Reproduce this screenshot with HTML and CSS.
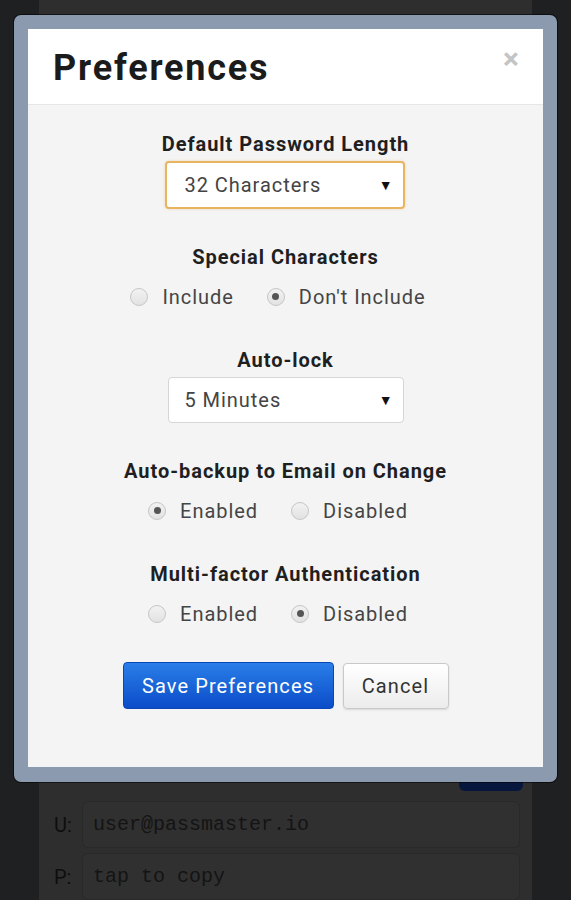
FILE: index.html
```html
<!DOCTYPE html>
<html lang="en">
<head>
<meta charset="utf-8">
<title>Preferences</title>
<link rel="stylesheet" href="styles.css">
</head>
<body>
<div class="page">
  <div class="panel">
    <div class="toolbar"><div class="dark-btn"></div></div>
    <div class="row"><span class="row-label">U:</span><div class="field">user@passmaster.io</div></div>
    <div class="row"><span class="row-label">P:</span><div class="field">tap to copy</div></div>
  </div>
</div>

<div class="modal">
  <div class="modal-inner">
    <div class="modal-header">
      <h1 class="modal-title">Preferences</h1>
      <span class="close">&times;</span>
    </div>
    <div class="modal-body">
      <div class="group">
        <div class="group-title">Default Password Length</div>
        <div class="select select-focus select-wide"><span>32 Characters</span><span class="arrow">&#9660;</span></div>
      </div>
      <div class="group">
        <div class="group-title">Special Characters</div>
        <div class="radios">
          <label class="opt"><span class="radio"></span>Include</label>
          <label class="opt"><span class="radio checked"></span>Don't Include</label>
        </div>
      </div>
      <div class="group">
        <div class="group-title">Auto-lock</div>
        <div class="select"><span>5 Minutes</span><span class="arrow">&#9660;</span></div>
      </div>
      <div class="group">
        <div class="group-title">Auto-backup to Email on Change</div>
        <div class="radios">
          <label class="opt"><span class="radio checked"></span>Enabled</label>
          <label class="opt"><span class="radio"></span>Disabled</label>
        </div>
      </div>
      <div class="group">
        <div class="group-title">Multi-factor Authentication</div>
        <div class="radios">
          <label class="opt"><span class="radio"></span>Enabled</label>
          <label class="opt"><span class="radio checked"></span>Disabled</label>
        </div>
      </div>
      <div class="actions">
        <button class="btn btn-primary">Save Preferences</button>
        <button class="btn btn-default">Cancel</button>
      </div>
    </div>
  </div>
</div>
</body>
</html>
```

FILE: styles.css
```css
* { box-sizing: border-box; }
html, body { margin: 0; padding: 0; }
body {
  background: #1f2022;
  font-family: Roboto, "Liberation Sans", sans-serif;
  letter-spacing: 0.06em;
  width: 571px;
  height: 900px;
  overflow: hidden;
  position: relative;
}
.page {
  padding: 0 39px;
}
.panel {
  background: #2e2e2e;
  height: 900px;
  padding: 0 9px 0 15px;
}
.toolbar {
  display: flex;
  justify-content: flex-end;
  padding-top: 741px;
}
.dark-btn {
  width: 64px;
  height: 50px;
  background: #07163d;
  border-radius: 0 0 6px 6px;
}
.row {
  display: flex;
  align-items: center;
  margin-top: 10px;
  padding-right: 3px;
}
.row + .row { margin-top: 5px; }
.row-label {
  width: 28px;
  font-size: 20px;
  letter-spacing: 0;
  color: #0e0e0e;
}
.field {
  flex: 1;
  height: 47px;
  border: 1px solid #292929;
  border-radius: 6px;
  background: #303030;
  padding-left: 10px;
  display: flex;
  align-items: center;
  font-family: "Liberation Mono", monospace;
  letter-spacing: 0;
  font-size: 20px;
  color: #141414;
}

.modal {
  position: absolute;
  left: 14px;
  top: 15px;
  width: 543px;
  height: 767px;
  background: #8b9aaf;
  border-radius: 7px;
  padding: 14px 14px 15px 14px;
  box-shadow: 0 0 0 1px rgba(0,0,0,0.55);
}
.modal-inner {
  height: 100%;
  display: flex;
  flex-direction: column;
  background: #f4f4f4;
}
.modal-header {
  height: 76px;
  background: #fff;
  border-bottom: 1px solid #e6e6e6;
  display: flex;
  align-items: center;
  justify-content: space-between;
  padding: 0 25px;
}
.modal-title {
  margin: 0;
  font-size: 36px;
  font-weight: 700;
  color: #1b1b1b;
  letter-spacing: 0.05em;
  position: relative;
  top: 1px;
}
.close {
  font-size: 30px;
  font-weight: 700;
  letter-spacing: 0;
  color: #c4c4c4;
  line-height: 1;
  position: relative;
  top: -8px;
  right: -1px;
}
.modal-body {
  flex: 1;
  padding-top: 27px;
  display: flex;
  flex-direction: column;
  align-items: center;
}
.group {
  display: flex;
  flex-direction: column;
  align-items: center;
}
.group + .group { margin-top: 36px; }
.group-title {
  font-size: 20px;
  font-weight: 700;
  line-height: 24px;
  color: #1f1f1f;
}
.select {
  margin-top: 5px;
  width: 236px;
  height: 46px;
  background: #fff;
  border: 1px solid #d6d6d6;
  border-radius: 4px;
  display: flex;
  align-items: center;
  justify-content: space-between;
  padding: 0 10px 0 16px;
  font-size: 20px;
  color: #444;
}
.select-wide {
  width: 240px;
  height: 48px;
  padding-left: 17px;
  padding-right: 11px;
}
.select-focus {
  border: 2px solid #e9b460;
  box-shadow: 0 0 3px rgba(233,180,96,0.4);
}
.arrow {
  font-size: 14px;
  letter-spacing: 0;
  color: #111;
}
.radios {
  margin-top: 12px;
  height: 31px;
  display: flex;
  align-items: center;
  gap: 18px;
}
.opt {
  display: flex;
  align-items: center;
  gap: 14px;
  font-size: 20px;
  color: #454545;
  padding-right: 15px;
}
.radio {
  width: 18px;
  height: 18px;
  border-radius: 50%;
  border: 1px solid #c6c6c6;
  background: linear-gradient(#f2f2f2, #e2e2e2);
  display: flex;
  align-items: center;
  justify-content: center;
}
.radio.checked::after {
  content: "";
  width: 7px;
  height: 7px;
  border-radius: 50%;
  background: #555;
}
.actions {
  margin-top: 33px;
  display: flex;
  gap: 9px;
  align-items: center;
}
.btn {
  font-family: Roboto, "Liberation Sans", sans-serif;
  letter-spacing: 0.055em;
  font-size: 20px;
  height: 47px;
  border-radius: 4px;
  padding: 0;
}
.btn-primary {
  width: 211px;
  color: #fff;
  background: linear-gradient(#2a7ee8, #0b4cc9);
  border: 1px solid #0a46b5;
}
.btn-default {
  width: 106px;
  height: 46px;
  color: #333;
  background: linear-gradient(#ffffff, #ececec);
  border: 1px solid #c9c9c9;
  box-shadow: 0 1px 2px rgba(0,0,0,0.12);
}
```
